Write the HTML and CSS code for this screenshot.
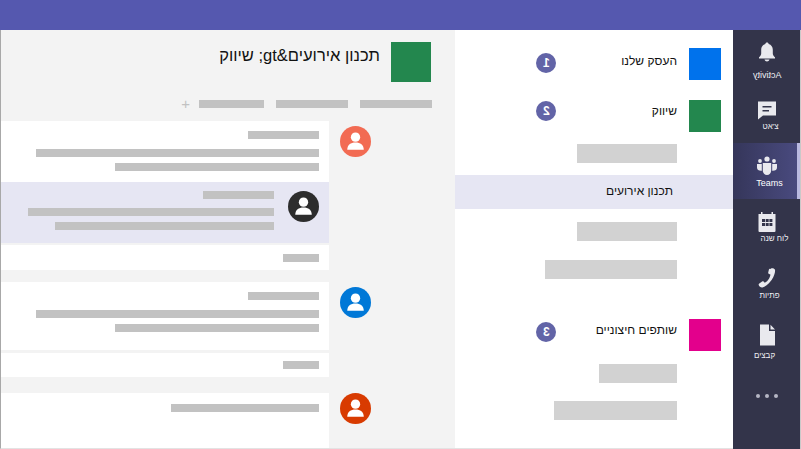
FILE: index.html
```html
<!DOCTYPE html>
<html lang="he" dir="rtl">
<head>
    <meta charset="UTF-8">
    <meta name="viewport" content="width=device-width, initial-scale=1.0">
    <title>Teams</title>
    <link rel="stylesheet" href="styles.css">
</head>
<body>
    <div class="topbar"></div>
    <div class="content">
        <nav class="rail">
            <div class="rail-item item-activity">
                <svg class="rail-icon" viewBox="0 0 24 24"><path d="M12 2.500c-1 0-1.600.7-1.700 1.500C7.700 4.800 6.200 7 6.200 9.800v3.700c0 1.600-.9 2.700-2.200 3.700v1.300h16v-1.300c-1.300-1-2.200-2.100-2.200-3.700V9.800c0-2.800-1.500-5-4.100-5.800-.1-.8-.7-1.500-1.700-1.500zM9.500 19.500c.3 1.200 1.300 2 2.500 2s2.200-.8 2.500-2z"/></svg>
                <span class="rail-label mirror">Activity</span>
            </div>
            <div class="rail-item item-chat">
                <svg class="rail-icon" viewBox="0 0 24 24"><path fill-rule="evenodd" d="M3 3.500h18v14H8l-5 4zM7.500 8v1.500h9V8zM7.500 12v1.500h6.500V12z"/></svg>
                <span class="rail-label he">צ'אט</span>
            </div>
            <div class="rail-item item-teams active">
                <svg class="rail-icon" viewBox="0 0 24 24"><circle cx="12" cy="5" r="2.600"/><circle cx="5" cy="7" r="1.900"/><circle cx="19" cy="7" r="1.900"/><path d="M7.800 9h8.400v7.500c0 2.500-1.900 4.500-4.200 4.500s-4.200-2-4.200-4.500zM2 10h4.800v6.800c-2.800.3-4.800-1-4.800-3.300zM17.200 10H22v3.500c0 2.300-2 3.600-4.800 3.300z"/></svg>
                <span class="rail-label">Teams</span>
            </div>
            <div class="rail-item item-calendar">
                <svg class="rail-icon" viewBox="0 0 24 24"><path fill-rule="evenodd" d="M6 2h1.500v2h9V2H18v2h2.500v17a1 1 0 0 1-1 1h-15a1 1 0 0 1-1-1V4H6zM7 9v3h3V9zM10.700 9v3h3V9zM14.400 9v3h3V9zM7 13v3h3v-3zM10.700 13v3h3v-3zM14.400 13v3h3v-3z"/></svg>
                <span class="rail-label he">לוח שנה</span>
            </div>
            <div class="rail-item item-calls">
                <svg class="rail-icon" viewBox="0 0 24 24"><path d="M16 2.500c1.600-.6 3.700.2 4 1.300.3 1.600-.3 5.500-3.400 10.100-3.200 4.500-7 6.900-9.200 7.500-1.400.3-3.300-1.200-3.700-2.500-.2-.7.1-1.100.6-1.500l2.800-1.900c.6-.4 1.200-.3 1.700.2l1 1.100c1.600-.9 3.100-2.500 4-3.900.8-1.300 1.500-3 1.600-4.500l-1.400-.5c-.6-.2-.9-.7-.8-1.400l.8-3.200c.2-.7.800-.8 2-.3z"/></svg>
                <span class="rail-label he">פתיות</span>
            </div>
            <div class="rail-item item-files">
                <svg class="rail-icon" viewBox="0 0 24 24"><path d="M5 1.500h9v6.500h6v14.500H5zM15.500 1.800l4.500 4.700h-4.500z"/></svg>
                <span class="rail-label he">קבצים</span>
            </div>
            <div class="rail-item rail-more">
                <i></i><i></i><i></i>
            </div>
        </nav>

        <aside class="channels">
            <div class="team team-first">
                <div class="square blue"></div>
                <span class="team-name">העסק שלנו</span>
                <span class="badge"><b class="mirror">1</b></span>
            </div>
            <div class="team team-second">
                <div class="square green"></div>
                <span class="team-name">שיווק</span>
                <span class="badge"><b class="mirror">2</b></span>
            </div>
            <div class="chan-bar w100 gap12"></div>
            <div class="chan-selected">תכנון אירועים</div>
            <div class="chan-bar w100 gap13"></div>
            <div class="chan-bar w132 gap19"></div>
            <div class="team team-third">
                <div class="square pink"></div>
                <span class="team-name">שותפים חיצוניים</span>
                <span class="badge"><b class="mirror">3</b></span>
            </div>
            <div class="chan-bar w78 gap13"></div>
            <div class="chan-bar w123 gap18"></div>
        </aside>

        <main class="main">
            <header class="main-head">
                <div class="head-square"></div>
                <h1>תכנון אירועים&amp;gt; שיווק</h1>
            </header>
            <div class="tabs">
                <div class="tab w72"></div>
                <div class="tab w72"></div>
                <div class="tab w65"></div>
                <span class="tab-add">+</span>
            </div>

            <section class="thread thread-one">
                <div class="side">
                    <div class="avatar coral">
                        <svg viewBox="0 0 32 32"><circle cx="16" cy="11.500" r="4.800"/><path d="M7.500 24.500c0-5 3.500-7.500 8.500-7.500s8.500 2.500 8.500 7.500z"/></svg>
                    </div>
                </div>
                <div class="cards">
                    <div class="card card-one">
                        <div class="bar w71"></div>
                        <div class="bar w283 mt10"></div>
                        <div class="bar w204 mt6"></div>
                    </div>
                    <div class="card selected">
                        <div class="avatar dark">
                            <svg viewBox="0 0 32 32"><circle cx="16" cy="11.500" r="4.800"/><path d="M7.500 24.500c0-5 3.500-7.500 8.500-7.500s8.500 2.500 8.500 7.500z"/></svg>
                        </div>
                        <div class="selected-body">
                            <div class="bar w71"></div>
                            <div class="bar w246 mt9"></div>
                            <div class="bar w219 mt6"></div>
                        </div>
                    </div>
                    <div class="card reply reply-one"><div class="bar w36"></div></div>
                </div>
            </section>

            <section class="thread thread-two">
                <div class="side">
                    <div class="avatar blue-av">
                        <svg viewBox="0 0 32 32"><circle cx="16" cy="11.500" r="4.800"/><path d="M7.500 24.500c0-5 3.500-7.500 8.500-7.500s8.500 2.500 8.500 7.500z"/></svg>
                    </div>
                </div>
                <div class="cards">
                    <div class="card card-two">
                        <div class="bar w71"></div>
                        <div class="bar w283 mt10"></div>
                        <div class="bar w204 mt6"></div>
                    </div>
                    <div class="card reply reply-two"><div class="bar w36"></div></div>
                </div>
            </section>

            <section class="thread thread-three">
                <div class="side">
                    <div class="avatar red">
                        <svg viewBox="0 0 32 32"><circle cx="16" cy="11.500" r="4.800"/><path d="M7.500 24.500c0-5 3.500-7.500 8.500-7.500s8.500 2.500 8.500 7.500z"/></svg>
                    </div>
                </div>
                <div class="cards">
                    <div class="card card-three">
                        <div class="bar w148"></div>
                    </div>
                </div>
            </section>
        </main>
    </div>
</body>
</html>
```

FILE: styles.css
```css
* {
    box-sizing: border-box;
}
html, body {
    height: 100%;
}
body {
    margin: 0;
    display: flex;
    flex-direction: column;
    overflow: hidden;
    font-family: "Liberation Sans", Arial, sans-serif;
    background-color: #fff;
    color: #111;
}
.mirror {
    display: inline-block;
    transform: scaleX(-1);
}

.topbar {
    height: 30px;
    flex: none;
    background-color: #5558af;
}
.content {
    flex: 1;
    min-height: 0;
    display: flex;
}

/* right rail */
.rail {
    width: 68px;
    flex: none;
    padding-top: 1px;
    background-color: #33344a;
    box-shadow: inset -1px 0 0 #33344a, inset 0 0 0 0 #33344a;
    border-right: 1px solid #c9c9c9;
}
.rail-item {
    height: 56px;
    display: flex;
    flex-direction: column;
    align-items: center;
    padding-top: 11px;
    color: #e9e9ee;
}
.rail-icon {
    width: 24px;
    height: 24px;
    flex: none;
    fill: #e9e9ee;
}
.rail-label {
    margin-top: -1px;
    font-size: 9px;
    line-height: 12px;
    color: #f0f0f4;
}
.rail-label.he {
    font-size: 8px;
}
.item-activity {
    padding-top: 9px;
}
.item-activity .rail-label {
    margin-top: 5px;
    margin-left: 2px;
}
.item-chat .rail-label {
    margin-left: 8px;
}
.item-teams .rail-label {
    margin-left: 6px;
}
.item-calendar .rail-label {
    margin-left: 16px;
}
.item-calls .rail-label {
    margin-top: 0;
    margin-left: 6px;
}
.item-files {
    padding-top: 12px;
}
.item-files .rail-label {
    margin-top: 3px;
    margin-right: 4px;
}
.rail-item.active {
    background: linear-gradient(to right, #35365a, #4a4b80);
    box-shadow: inset -3px 0 0 #b9b9e0;
}
.rail-item.active .rail-label {
    color: #fff;
}
.rail-more {
    flex-direction: row;
    justify-content: center;
    align-items: center;
    gap: 5px;
    padding-top: 2px;
}
.rail-more i {
    width: 4px;
    height: 4px;
    border-radius: 50%;
    background-color: #b6b6c4;
}

/* channel list */
.channels {
    width: 278px;
    flex: none;
    padding-top: 18px;
    background-color: #fff;
    border-bottom: 1px solid #e3e3e3;
}
.team {
    display: flex;
    padding-right: 12px;
    height: 32px;
}
.team-second {
    margin-top: 20px;
}
.team-third {
    margin-top: 40px;
}
.square {
    width: 32px;
    height: 32px;
    flex: none;
}
.blue {
    background-color: #0072ec;
}
.green {
    background-color: #23874e;
}
.pink {
    background-color: #e3008c;
}
.team-name {
    width: 121px;
    margin-right: 12px;
    margin-top: 5px;
    font-size: 12px;
    line-height: 16px;
}
.team-third .team-name {
    margin-top: 3px;
}
.badge {
    width: 20px;
    height: 20px;
    margin-top: 5px;
    border-radius: 50%;
    background-color: #6264a7;
    color: #fff;
    font-size: 12px;
    line-height: 20px;
    text-align: center;
}
.team-third .badge {
    margin-top: 3px;
}
.team-second .badge {
    margin-top: 1px;
}
.team-second .team-name {
    margin-top: 3px;
}
.chan-bar {
    height: 19px;
    margin-right: 56px;
    background-color: #d2d2d2;
}
.chan-selected {
    height: 34px;
    margin-top: 12px;
    padding-right: 60px;
    background-color: #e6e6f3;
    font-size: 12px;
    line-height: 32px;
}
.w100 { width: 100px; }
.w132 { width: 132px; }
.w78 { width: 78px; }
.w123 { width: 123px; }
.gap12 { margin-top: 12px; }
.gap13 { margin-top: 13px; }
.gap18 { margin-top: 18px; }
.gap19 { margin-top: 19px; }

/* main column */
.main {
    flex: 1;
    min-width: 0;
    display: flex;
    flex-direction: column;
    background-color: #f3f3f3;
    border-left: 1px solid #a8a8a8;
    border-bottom: 1px solid #e3e3e3;
}
.main-head {
    display: flex;
    padding: 12px 24px 0 0;
}
.head-square {
    width: 40px;
    height: 40px;
    flex: none;
    background-color: #23874e;
}
.main-head h1 {
    margin: 2px 11px 0 0;
    font-size: 16.5px;
    font-weight: normal;
    line-height: 22px;
}
.tabs {
    display: flex;
    align-items: center;
    gap: 12px;
    height: 8px;
    margin-top: 18px;
    padding-right: 23px;
}
.tab {
    height: 8px;
    background-color: #c2c2c2;
}
.w72 { width: 72px; }
.w65 { width: 65px; }
.tab-add {
    margin-right: -3px;
    font-size: 15px;
    line-height: 8px;
    color: #c2c2c2;
}

.thread {
    display: flex;
}
.thread-one {
    margin-top: 13px;
}
.thread-two {
    margin-top: 12px;
}
.thread-three {
    margin-top: 16px;
    flex: 1;
}
.side {
    width: 126px;
    flex: none;
    padding-right: 84px;
}
.cards {
    flex: 1;
    display: flex;
    flex-direction: column;
}
.avatar {
    width: 31px;
    height: 31px;
    flex: none;
    border-radius: 50%;
}
.avatar svg {
    display: block;
    width: 31px;
    height: 31px;
    fill: #fff;
}
.coral { background-color: #f26b53; margin-top: 5px; }
.dark { background-color: #2d2d2d; margin-top: 9px; }
.blue-av { background-color: #0078d7; margin-top: 5px; }
.red { background-color: #d83b01; margin-top: 0; }

.card {
    padding-right: 10px;
    background-color: #fff;
}
.card-one {
    height: 61px;
    padding-top: 10px;
}
.selected {
    height: 61px;
    display: flex;
    gap: 14px;
    background-color: #e6e6f3;
}
.selected-body {
    padding-top: 9px;
}
.reply {
    padding-top: 9px;
}
.reply-one {
    height: 25px;
    margin-top: 2px;
}
.card-two {
    height: 68px;
    padding-top: 10px;
}
.reply-two {
    height: 24px;
    margin-top: 3px;
    padding-top: 8px;
}
.card-three {
    flex: 1;
    padding-top: 11px;
}
.bar {
    height: 8px;
    background-color: #c2c2c2;
}
.w36 { width: 36px; }
.w71 { width: 71px; }
.w148 { width: 148px; }
.w204 { width: 204px; }
.w219 { width: 219px; }
.w246 { width: 246px; }
.w283 { width: 283px; }
.mt6 { margin-top: 6px; }
.mt9 { margin-top: 9px; }
.mt10 { margin-top: 10px; }
```
